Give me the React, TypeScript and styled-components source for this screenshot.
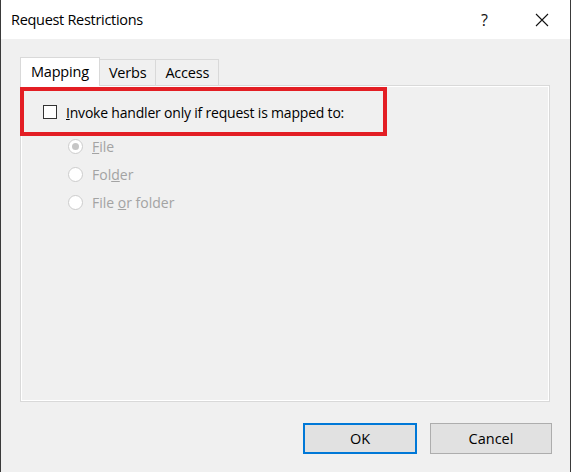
import styled, { createGlobalStyle } from "styled-components";

const GlobalStyle = createGlobalStyle`
  html, body {
    margin: 0;
    padding: 0;
    background: #f0f0f0;
  }
  * {
    box-sizing: border-box;
  }
`;

const Window = styled.div`
  width: 571px;
  height: 472px;
  overflow: hidden;
  background: #f0f0f0;
  border-left: 1px solid #3a3a3a;
  border-right: 1px solid #3a3a3a;
  display: flex;
  flex-direction: column;
  font-family: "Open Sans", "Noto Sans", sans-serif;
  color: #000;
`;

const TitleBar = styled.div`
  height: 39px;
  background: #fff;
  display: flex;
  align-items: center;
  padding-left: 10px;
  font-size: 14.5px;
`;

const Title = styled.div`
  flex: 1;
  letter-spacing: -0.3px;
`;

const TitleButton = styled.div`
  width: 57px;
  height: 39px;
  display: flex;
  align-items: center;
  justify-content: center;
  font-size: 16px;
  color: #111;
`;

const Body = styled.div`
  flex: 1;
  padding: 19px 18px 0 19px;
  display: flex;
  flex-direction: column;
`;

const TabStrip = styled.div`
  display: flex;
  align-items: flex-end;
  height: 28px;
  position: relative;
  z-index: 1;
  margin-bottom: -1px;
`;

const Tab = styled.div<{ $active?: boolean }>`
  height: ${(p) => (p.$active ? 29 : 27)}px;
  padding: 0 ${(p) => (p.$active ? 10 : 9)}px;
  background: ${(p) => (p.$active ? "#fff" : "#f0f0f0")};
  border: 1px solid #d9d9d9;
  border-bottom: ${(p) => (p.$active ? "none" : "1px solid #d9d9d9")};
  margin-left: ${(p) => (p.$active ? 0 : -1)}px;
  display: flex;
  align-items: center;
  font-size: 14.5px;
  letter-spacing: -0.2px;
  padding-bottom: ${(p) => (p.$active ? 2 : 0)}px;
`;

const Panel = styled.div`
  height: 317px;
  margin-right: 2px;
  border: 1px solid #d9d9d9;
  box-shadow: inset 0 0 0 1px #fff, inset 0 0 0 2px #f0f0f0;
  background: #f0f0f0;
  padding-top: 1px;
  display: flex;
  flex-direction: column;
`;

const Highlight = styled.div`
  width: 367px;
  height: 49px;
  margin-left: -1px;
  border: 4px solid #e31e24;
  display: flex;
  align-items: center;
  padding-left: 19px;
  padding-top: 1px;
  font-size: 14px;
  letter-spacing: -0.2px;
`;

const CheckBox = styled.span`
  width: 14px;
  height: 14px;
  border: 1px solid #333;
  background: #fff;
  margin-right: 9px;
  flex-shrink: 0;
`;

const RadioList = styled.div`
  display: flex;
  flex-direction: column;
  gap: 6px;
  margin-top: -1px;
  padding: 0 0 0 47px;
`;

const RadioRow = styled.div`
  display: flex;
  align-items: center;
  height: 22px;
  font-size: 14px;
  color: #a3a3a3;
`;

const Radio = styled.span<{ $checked?: boolean }>`
  width: 15px;
  height: 15px;
  border-radius: 50%;
  border: 1px solid #cccccc;
  background: #fff;
  margin-right: 9px;
  display: flex;
  align-items: center;
  justify-content: center;
  &::after {
    content: "";
    display: ${(p) => (p.$checked ? "block" : "none")};
    width: 7px;
    height: 7px;
    border-radius: 50%;
    background: #c6c6c6;
  }
`;

const ButtonRow = styled.div`
  display: flex;
  justify-content: flex-end;
  gap: 13px;
  padding-top: 21px;
`;

const Button = styled.div<{ $default?: boolean; $width: number }>`
  width: ${(p) => p.$width}px;
  height: 31px;
  background: #e1e1e1;
  border: ${(p) => (p.$default ? "2px solid #0078d7" : "1px solid #adadad")};
  display: flex;
  align-items: center;
  justify-content: center;
  font-size: 14.5px;
`;

export default function App() {
  return (
    <>
      <GlobalStyle />
      <Window>
        <TitleBar>
          <Title>Request Restrictions</Title>
          <TitleButton>?</TitleButton>
          <TitleButton>
            <svg width="14" height="14" viewBox="0 0 14 14">
              <path d="M1 1 L13 13 M13 1 L1 13" stroke="#111" strokeWidth="1.1" />
            </svg>
          </TitleButton>
        </TitleBar>
        <Body>
          <TabStrip>
            <Tab $active>Mapping</Tab>
            <Tab>Verbs</Tab>
            <Tab>Access</Tab>
          </TabStrip>
          <Panel>
            <Highlight>
              <CheckBox />
              <span>
                <u>I</u>nvoke handler only if request is mapped to:
              </span>
            </Highlight>
            <RadioList>
              <RadioRow>
                <Radio $checked />
                <span>
                  <u>F</u>ile
                </span>
              </RadioRow>
              <RadioRow>
                <Radio />
                <span>
                  Fol<u>d</u>er
                </span>
              </RadioRow>
              <RadioRow>
                <Radio />
                <span>
                  File <u>o</u>r folder
                </span>
              </RadioRow>
            </RadioList>
          </Panel>
          <ButtonRow>
            <Button $default $width={114}>OK</Button>
            <Button $width={122}>Cancel</Button>
          </ButtonRow>
        </Body>
      </Window>
    </>
  );
}
